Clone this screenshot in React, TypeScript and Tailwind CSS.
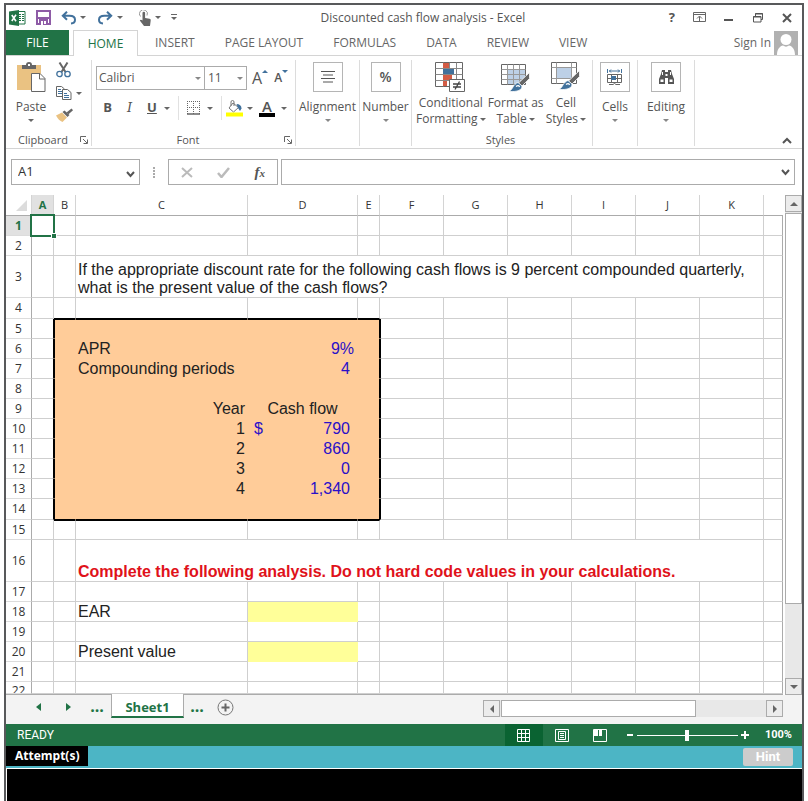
import type { ReactNode } from "react";

const UI = "font-['Open_Sans','Noto_Sans',sans-serif]";

function Caret({ className = "", color = "#666" }: { className?: string; color?: string }) {
  return (
    <svg className={`shrink-0 ${className}`} width="6" height="3" viewBox="0 0 6 3" aria-hidden="true">
      <path d="M0 0h6L3 3z" fill={color} />
    </svg>
  );
}

function Launcher() {
  return (
    <svg width="8" height="8" viewBox="0 0 8 8" fill="none" stroke="#666" aria-hidden="true">
      <path d="M.5 6V.5H6M3 3l4 4M7.5 3.5v4h-4" />
    </svg>
  );
}

function ExcelLogo() {
  return (
    <svg width="17" height="16" viewBox="0 0 17 16" aria-hidden="true">
      <path d="M9.5 1.500h6.500v12.500H9.500z" fill="#fff" stroke="#217346" />
      <path d="M10 4.500h5M10 6.500h5M10 8.500h5M10 10.500h5" stroke="#217346" />
      <path d="M12.500 2v11" stroke="#fff" />
      <path d="M0 1.500L10 0v16L0 14.500z" fill="#217346" />
      <path d="M2.800 5l4.200 6.200M7 4.800L2.800 11" stroke="#fff" strokeWidth="1.600" />
    </svg>
  );
}

function SaveIcon() {
  return (
    <svg width="15" height="15" viewBox="0 0 15 15" aria-hidden="true">
      <path d="M1 1h13v13H1z" fill="#fff" stroke="#8e5ba6" strokeWidth="2" />
      <path d="M1 8h13" stroke="#8e5ba6" strokeWidth="2" />
      <path d="M3 9h9v6H3z" fill="#8e5ba6" />
      <path d="M5 11h2v4H5zM8 11h2v3H8z" fill="#fff" />
    </svg>
  );
}

function UndoIcon({ flip = false }: { flip?: boolean }) {
  return (
    <svg width="15" height="14" viewBox="0 0 15 14" fill="none" stroke="#41719c" strokeWidth="2" aria-hidden="true">
      {flip ? (
        <path d="M9 .7l4.200 4-4.200 4M13 4.700H6.500C3 4.700 1 6.500 1 8.700s1.500 3.600 4 3.800" />
      ) : (
        <path d="M6 .7L1.800 4.700l4.200 4M2 4.700h6.500c3.500 0 5.500 1.800 5.500 4s-1.500 3.600-4 3.800" />
      )}
    </svg>
  );
}

function TouchIcon() {
  return (
    <svg width="12" height="16" viewBox="0 0 12 16" aria-hidden="true">
      <path d="M1.500 6.500a4 4 0 1 1 6.500-1" fill="none" stroke="#999" />
      <path d="M3.500 3a1.300 1.300 0 0 1 2.600 0v5l4.400.8c.9.200 1.300.8 1.200 1.600L11 16H5L.8 10.500c.6-1 1.700-.9 2.700.1z" fill="#666" />
    </svg>
  );
}

function PasteIcon() {
  return (
    <svg width="29" height="31" viewBox="0 0 29 31" aria-hidden="true">
      <path d="M0 3h24v25H0z" fill="#eac282" />
      <path d="M5 7V3h4a3 3 0 0 1 6 0h4v4z" fill="#666" />
      <path d="M11 2h2v2h-2z" fill="#fff" />
      <path d="M14.500 11.500H23l5 5v13H14.500z" fill="#fff" stroke="#666" />
      <path d="M22.500 11.500V17H28" fill="none" stroke="#666" />
    </svg>
  );
}

function ScissorsIcon() {
  return (
    <svg width="15" height="16" viewBox="0 0 15 16" fill="none" aria-hidden="true">
      <path d="M3.500 0.500l6 9.500M11.500 0.500l-6 9.500" stroke="#666" strokeWidth="2" />
      <circle cx="3.500" cy="12" r="2.700" stroke="#41719c" strokeWidth="1.300" />
      <circle cx="11.500" cy="12" r="2.700" stroke="#41719c" strokeWidth="1.300" />
    </svg>
  );
}

function CopyIcon() {
  return (
    <svg width="16" height="14" viewBox="0 0 16 14" fill="#fff" stroke="#666" aria-hidden="true">
      <path d="M.5.5h5l3 2.500v7.500h-8z" />
      <path d="M2 3.500h3M2 5.500h4M2 7.500h4" stroke="#41719c" />
      <path d="M6.500 3.500h5l3.500 3v7H6.500z" />
      <path d="M8 7.500h3M8 9.500h5M8 11.500h5" stroke="#41719c" />
    </svg>
  );
}

function BrushIcon() {
  return (
    <svg width="17" height="14" viewBox="0 0 17 14" aria-hidden="true">
      <path d="M0 7.500l6-3 5 5-4.500 4.500c-2.500-1-4.800-3-6.500-6.500z" fill="#eac282" />
      <path d="M6.500 4l2-1.500 5 4.500-2 2z" fill="#666" />
      <path d="M10.500 4.500L15.500.5l1.500 1.800-4.500 4z" fill="#666" />
    </svg>
  );
}

function BordersIcon() {
  return (
    <svg width="14" height="14" viewBox="0 0 14 14" fill="none" stroke="#666" aria-hidden="true">
      <path d="M.5 13V0M6.500 13V0M12.500 13V0M0 .5h13M0 6.500h13" strokeDasharray="1 1" />
      <path d="M0 13h13" strokeWidth="1.500" />
    </svg>
  );
}

function FillIcon() {
  return (
    <svg width="17" height="17" viewBox="0 0 17 17" aria-hidden="true">
      <path d="M7 3l5.500 4.500-5 4.500L3 8z" fill="#fff" stroke="#777" />
      <path d="M5 6V2a1.500 1.500 0 0 1 3 0v4" fill="none" stroke="#777" />
      <path d="M10.500 4c3 0 5 1.500 5 4.500l-1.500 2.500-2-3z" fill="#41719c" />
      <path d="M0 12.500h17v4H0z" fill="#ff0" />
    </svg>
  );
}

function ConditionalIcon() {
  return (
    <svg width="31" height="31" viewBox="0 0 31 31" aria-hidden="true">
      <path d="M.5.5h27v24H.5z" fill="#fff" stroke="#666" />
      <path d="M.5 6.500h27M.5 12.500h27M.5 18.500h27M8.500.5v24M14.500.5v24M21.500.5v24" stroke="#888" />
      <path d="M8 1h6v5H8zM8 13h9v5H8zM8 19h4v5H8z" fill="#d35c45" />
      <path d="M8 7h11v5H8z" fill="#41719c" />
      <path d="M14.500 17.500h15v12h-15z" fill="#fff" stroke="#666" />
      <path d="M18 22h8M18 25h8M24.500 19.500l-4.500 8" stroke="#444" strokeWidth="1.300" />
    </svg>
  );
}

// brush shared by the two style buttons
function StyleBrush() {
  return (
    <>
      <path d="M28.500 8.500v6L21 22l-3.500-3z" fill="#666" stroke="#fff" strokeWidth=".8" />
      <path d="M17 18.500l4 3.500c0 4-4 6-13 5.500 4-2 4-7.500 9-9z" fill="#41719c" stroke="#fff" strokeWidth=".8" />
      <path d="M15 22.500c2-1.500 3-1 3.500.5" fill="none" stroke="#fff" strokeWidth="1.400" />
    </>
  );
}

function FormatTableIcon() {
  return (
    <svg width="30" height="31" viewBox="0 0 30 31" aria-hidden="true">
      <g transform="translate(0 2)">
        <path d="M.5.5h24v20H.5z" fill="#fff" stroke="#666" />
        <path d="M7 6h17v14H7z" fill="#bdd0e6" />
        <path d="M.5 5.500h24M.5 10.500h24M.5 15.500h24M6.500.5v20M12.500.5v20M18.500.5v20" stroke="#999" />
        <StyleBrush />
      </g>
    </svg>
  );
}

function CellStylesIcon() {
  return (
    <svg width="30" height="29" viewBox="0 0 30 29" aria-hidden="true">
      <path d="M.5.5h25v21H.5z" fill="#fff" stroke="#666" />
      <path d="M6 6h15v10H6z" fill="#bdd0e6" />
      <path d="M.5 5.500h25M.5 16.500h25M5.500.5v21M20.500.5v21" stroke="#999" />
      <StyleBrush />
    </svg>
  );
}

function CellsIcon() {
  return (
    <svg width="16" height="17" viewBox="0 0 16 17" fill="none" aria-hidden="true">
      <path d="M.5 0v4M14.500 0v4M2 2h11M4 .5L2.500 2 4 3.500M11 .5L12.500 2 11 3.500" stroke="#41719c" />
      <path d="M.5 5.500h14v8H.5zM.5 9.500h14M4.500 5.500v8M10.500 5.500v8" stroke="#666" />
      <path d="M4 7h5v4H4z" fill="#41719c" />
      <path d="M2 15.500h4l1.500-1 1.500 1h4" stroke="#666" />
    </svg>
  );
}

function BinocularsIcon() {
  return (
    <svg width="15" height="14" viewBox="0 0 15 14" aria-hidden="true">
      <path d="M3 0h3v2h3V0h3l1 4 2 5v5H9V8H6v6H0V9l2-5z" fill="#555" />
      <path d="M1.500 9.500h3V12h-3zM10.500 9.500h3V12h-3zM6.500 4h2v2h-2z" fill="#fff" />
      <path d="M3.500 2v3M11.500 2v3" stroke="#fff" />
    </svg>
  );
}

function Divider() {
  return <span className="h-6 w-px shrink-0 bg-[#e1e1e1]" />;
}

function Group({ label, launcher = false, className, children }: { label?: string; launcher?: boolean; className: string; children: ReactNode }) {
  return (
    <section className={`flex h-[86px] shrink-0 flex-col border-r border-[#dcdcdc] ${className}`}>
      <div className="flex-1">{children}</div>
      {label && (
        <div className="flex h-3 items-center pr-[3px] text-[11px] leading-3">
          <span className="flex-1 text-center">{label}</span>
          {launcher && (
            <button aria-label={`${label} settings`}>
              <Launcher />
            </button>
          )}
        </div>
      )}
    </section>
  );
}

function BoxButton({ label, children }: { label: string; children: ReactNode }) {
  return (
    <button className="flex w-full flex-col items-center pt-0.5">
      <span className="flex size-[30px] items-center justify-center border border-[#b5b5b5]">{children}</span>
      <span className="mt-[7px] leading-4">{label}</span>
      <Caret className="mt-1" color="#888" />
    </button>
  );
}

function StyleButton({ lines, icon }: { lines: [string, string]; icon: ReactNode }) {
  return (
    <button className="flex flex-col items-center pt-0.5 leading-4">
      <span className="flex h-[33px] justify-center">{icon}</span>
      <span className="whitespace-nowrap">{lines[0]}</span>
      <span className="flex items-center gap-0.5 whitespace-nowrap">
        {lines[1]}
        <Caret />
      </span>
    </button>
  );
}

function TitleBar() {
  return (
    <header className="flex h-[25px] items-center pr-[10px] pl-[3px]">
      <ExcelLogo />
      <button aria-label="Save" className="ml-[10px]"><SaveIcon /></button>
      <button aria-label="Undo" className="ml-[10px] flex items-center gap-1"><UndoIcon /><Caret /></button>
      <button aria-label="Redo" className="ml-3 flex items-center gap-1"><UndoIcon flip /><Caret /></button>
      <button aria-label="Touch mode" className="ml-4 flex items-center gap-1"><TouchIcon /><Caret /></button>
      <button aria-label="Customize toolbar" className="ml-[10px]">
        <svg width="6" height="7" viewBox="0 0 6 7"><path d="M0 .5h6" stroke="#666" /><path d="M0 3h6L3 6z" fill="#666" /></svg>
      </button>
      <h1 className="flex-1 text-center text-xs text-[#555]">Discounted cash flow analysis - Excel</h1>
      <button aria-label="Help" className="text-[13px] font-bold text-[#555]">?</button>
      <button aria-label="Ribbon display options" className="ml-[18px]">
        <svg width="14" height="11" viewBox="0 0 14 11" fill="none" stroke="#666"><path d="M.5.5h12v9H.5zM.5 2.500h12M6.500 9V4.500M4 6.500L6.500 4 9 6.500" /></svg>
      </button>
      <button aria-label="Minimize" className="ml-[17px]">
        <svg width="10" height="8" viewBox="0 0 10 8"><path d="M0 6h9" stroke="#555" strokeWidth="2" /></svg>
      </button>
      <button aria-label="Restore" className="ml-[19px]">
        <svg width="11" height="10" viewBox="0 0 11 10" fill="none" stroke="#555"><path d="M2.500 3V.5h7v6H8M2 1h8M.5 3.500H8v5.500H.5zM0 4h8" /></svg>
      </button>
      <button aria-label="Close" className="ml-[18px]">
        <svg width="10" height="10" viewBox="0 0 10 10"><path d="M1 1l8 8M9 1L1 9" stroke="#555" strokeWidth="2" /></svg>
      </button>
    </header>
  );
}

function RibbonTabs() {
  return (
    <nav className="flex h-[26px] border-b border-[#d4d4d4] text-xs text-[#666]">
      <button className="w-[63px] bg-[#217346] text-white">FILE</button>
      <button className="-mb-px ml-1 w-[65px] border border-b-0 border-[#d4d4d4] bg-white text-[#217346]">HOME</button>
      <div className="flex pl-0.5">
        {["INSERT", "PAGE LAYOUT", "FORMULAS", "DATA", "REVIEW", "VIEW"].map((tab) => (
          <button key={tab} className="px-[15px]">{tab}</button>
        ))}
      </div>
      <a href="#signin" className="ml-auto flex items-center gap-[3px] pr-1">
        Sign In
        <svg width="24" height="24" viewBox="0 0 24 24" aria-hidden="true">
          <path d="M0 0h24v24H0z" fill="#b1b1b1" />
          <circle cx="12" cy="8.500" r="5.500" fill="#fff" />
          <path d="M3 24c0-6 3-9 6-9.500 2 1.500 4 1.500 6 0 3 .5 6 3.500 6 9.500z" fill="#fff" />
        </svg>
      </a>
    </nav>
  );
}

function Ribbon() {
  return (
    <div className="flex h-[93px] border-b border-[#d4d4d4] pt-1 text-xs text-[#555]">
      <Group label="Clipboard" launcher className="w-[86px]">
        <div className="flex pt-0.5">
          <button className="flex w-[50px] flex-col items-center">
            <PasteIcon />
            <span className="mt-1.5 leading-4">Paste</span>
            <Caret className="mt-1" />
          </button>
          <div className="flex flex-col items-start gap-2">
            <button aria-label="Cut"><ScissorsIcon /></button>
            <button aria-label="Copy" className="flex items-center gap-1"><CopyIcon /><Caret /></button>
            <button aria-label="Format painter"><BrushIcon /></button>
          </div>
        </div>
      </Group>

      <Group label="Font" launcher className="w-[204px]">
        <div className="flex items-center pt-1 pl-1">
          <label className="relative flex items-center text-xs">
            <select aria-label="Font" className="h-6 w-[109px] appearance-none border border-[#ababab] pl-0.5">
              <option>Calibri</option>
            </select>
            <Caret className="absolute right-1" color="#888" />
          </label>
          <label className="relative -ml-px flex items-center text-xs">
            <select aria-label="Font size" className="h-6 w-[43px] appearance-none border border-[#ababab] pl-[3px]">
              <option>11</option>
            </select>
            <Caret className="absolute right-1" color="#888" />
          </label>
          <button aria-label="Increase font size" className="ml-[5px] flex text-[#555]">
            <span className="text-base leading-7">A</span>
            <Caret className="mt-1.5 rotate-180" color="#41719c" />
          </button>
          <button aria-label="Decrease font size" className="ml-1.5 flex font-semibold text-[#555]">
            <span className="text-xs leading-7">A</span>
            <Caret className="mt-1.5" color="#41719c" />
          </button>
        </div>
        <div className="flex h-8 items-center pl-[11px] text-[13px]">
          <button className="w-[9px] font-bold">B</button>
          <button className="ml-[13px] w-[9px] font-['DejaVu_Serif',serif] text-[13px] italic">I</button>
          <button className="ml-[13px] w-[9px] font-bold underline">U</button>
          <Caret className="ml-2" />
          <span className="w-2" />
          <Divider />
          <button aria-label="Borders" className="ml-2 flex items-center gap-1.5"><BordersIcon /><Caret /></button>
          <span className="w-2" />
          <Divider />
          <button aria-label="Fill color" className="ml-1 flex items-center gap-1"><FillIcon /><Caret /></button>
          <button aria-label="Font color" className="ml-1.5 flex items-center gap-1.5">
            <span className="w-4 border-b-4 border-black text-[15px] leading-[13px] font-semibold">A</span>
            <Caret />
          </button>
        </div>
      </Group>

      <Group className="w-16">
        <BoxButton label="Alignment">
          <svg width="16" height="12" viewBox="0 0 16 12" stroke="#555"><path d="M1 .5h14M3 4h10M1 7.500h14M3 11h10" /></svg>
        </BoxButton>
      </Group>
      <Group className="w-[52px]">
        <BoxButton label="Number">
          <span className="text-sm font-semibold">%</span>
        </BoxButton>
      </Group>

      <Group label="Styles" className="w-[181px]">
        <div className="flex justify-between pr-1.5 pl-1">
          <StyleButton lines={["Conditional", "Formatting"]} icon={<ConditionalIcon />} />
          <StyleButton lines={["Format as", "Table"]} icon={<FormatTableIcon />} />
          <StyleButton lines={["Cell", "Styles"]} icon={<CellStylesIcon />} />
        </div>
      </Group>

      <Group className="w-[45px]">
        <BoxButton label="Cells"><CellsIcon /></BoxButton>
      </Group>
      <Group className="w-[57px]">
        <BoxButton label="Editing"><BinocularsIcon /></BoxButton>
      </Group>

      <button aria-label="Collapse ribbon" className="mt-auto mr-[10px] mb-1 ml-auto">
        <svg width="10" height="7" viewBox="0 0 10 7" fill="none"><path d="M1 6l4-4 4 4" stroke="#555" strokeWidth="2" /></svg>
      </button>
    </div>
  );
}

function ChevronDown() {
  return (
    <svg width="9" height="7" viewBox="0 0 9 7" fill="none" aria-hidden="true">
      <path d="M1 1l3.500 4L8 1" stroke="#555" strokeWidth="2" />
    </svg>
  );
}

function FormulaBar() {
  return (
    <div className="flex h-[46px] items-start pt-[10px] pr-[7px] pl-[5px] text-[#333]">
      <div className="flex h-[26px] w-[129px] items-center border border-[#ababab] pr-1 pl-1.5">
        <input aria-label="Name box" defaultValue="A1" className="w-0 flex-1 text-[13px] outline-none" />
        <button aria-label="Named ranges" className="pt-1"><ChevronDown /></button>
      </div>
      <svg className="mx-3 mt-2" width="4" height="12" viewBox="0 0 4 12" fill="#aaa" aria-hidden="true">
        <path d="M1 0h2v2H1zM1 3h2v2H1zM1 6h2v2H1zM1 9h2v2H1z" />
      </svg>
      <div className="flex h-[26px] w-[110px] items-center justify-between border border-[#ababab] px-3">
        <button aria-label="Cancel">
          <svg width="12" height="11" viewBox="0 0 12 11"><path d="M1 1l10 9M11 1L1 10" stroke="#bbb" strokeWidth="2" /></svg>
        </button>
        <button aria-label="Enter">
          <svg width="13" height="11" viewBox="0 0 13 11" fill="none"><path d="M1 6l3.500 4L12 1" stroke="#bbb" strokeWidth="2.500" /></svg>
        </button>
        <button aria-label="Insert function" className="font-['Liberation_Serif',serif] text-[15px] leading-4 font-bold text-[#555] italic">
          f<span className="text-[11px]">x</span>
        </button>
      </div>
      <div className="ml-[3px] flex h-[26px] flex-1 items-center border border-[#ababab] pr-1 pl-2">
        <input aria-label="Formula" className="w-0 flex-1 text-[13px] outline-none" />
        <button aria-label="Expand formula bar"><ChevronDown /></button>
      </div>
    </div>
  );
}

const COLUMNS = [
  { name: "A", width: "w-[22px]" },
  { name: "B", width: "w-[22px]" },
  { name: "C", width: "w-[172px]" },
  { name: "D", width: "w-[110px]" },
  { name: "E", width: "w-[22px]" },
  { name: "F", width: "w-16" },
  { name: "G", width: "w-16" },
  { name: "H", width: "w-16" },
  { name: "I", width: "w-16" },
  { name: "J", width: "w-16" },
  { name: "K", width: "w-16" },
  { name: "", width: "" },
];

const ROWS = Array.from({ length: 22 }, (_, i) => i + 1);

const rowHeight = (row: number) => {
  if (row === 3 || row === 16) return "h-[42px]";
  if (row === 4 || row === 14) return "h-[21px]";
  if (row === 22) return "h-3";
  return "h-5";
};

const LABEL = "pl-0.5 text-[#222]";
const YEAR = "pr-0.5 text-right text-[#222]";
const INPUT = "pr-[7px] text-right text-[#2a10c8]";

const CELLS: Record<string, { value: ReactNode; className: string }> = {
  C3: {
    value: (
      <p className="whitespace-normal">
        If the appropriate discount rate for the following cash flows is 9 percent compounded quarterly, what is the present value of the cash flows?
      </p>
    ),
    className: "pl-0.5 align-bottom text-[#222]",
  },
  C6: { value: "APR", className: LABEL },
  D6: { value: "9%", className: "pr-[3px] text-right text-[#2a10c8]" },
  C7: { value: "Compounding periods", className: LABEL },
  D7: { value: "4", className: INPUT },
  C9: { value: "Year", className: YEAR },
  D9: { value: "Cash flow", className: "text-center text-[#222]" },
  C10: { value: "1", className: YEAR },
  D10: {
    value: (
      <span className="flex justify-between">
        <span>$</span>
        <span>790</span>
      </span>
    ),
    className: "pr-[7px] pl-1.5 text-[#2a10c8]",
  },
  C11: { value: "2", className: YEAR },
  D11: { value: "860", className: INPUT },
  C12: { value: "3", className: YEAR },
  D12: { value: "0", className: INPUT },
  C13: { value: "4", className: YEAR },
  D13: { value: "1,340", className: INPUT },
  C16: { value: "Complete the following analysis. Do not hard code values in your calculations.", className: "pl-0.5 align-bottom font-bold text-[#e0121a]" },
  C18: { value: "EAR", className: LABEL },
  C20: { value: "Present value", className: LABEL },
};

// fill and border colours, including the framed B5:E14 block
function cellPaint(col: string, row: number) {
  const boxRow = row >= 5 && row <= 14;
  const boxCol = col !== "" && "BCDE".includes(col);
  const inBox = boxRow && boxCol;
  const out: string[] = [];

  if (col === "D" && (row === 18 || row === 20)) return "bg-[#ffff99] border-[#ffff99]";

  out.push(inBox ? "bg-[#ffcc99]" : "bg-white");
  if (boxCol && (row === 4 || row === 14)) out.push("border-b-black");
  else out.push(inBox ? "border-b-[#ffcc99]" : "border-b-[#cfcfcf]");
  if (boxRow && (col === "A" || col === "E")) out.push("border-r-black");
  else if (col === "") out.push("border-r-[#ababab]");
  else out.push(inBox ? "border-r-[#ffcc99]" : "border-r-[#cfcfcf]");
  if (boxCol && (row === 5 || row === 15)) out.push("border-t border-t-black");
  if (boxRow && (col === "B" || col === "F")) out.push("border-l border-l-black");
  return out.join(" ");
}

function Sheet() {
  return (
    <table className="w-full table-fixed border-separate border-spacing-0 border-b border-b-[#ababab]">
      <thead>
        <tr className="h-[21px] text-[11px] text-[#333]">
          <th className="w-[26px] border-r border-b border-r-[#d4d4d4] border-b-[#ababab] p-0">
            <svg className="mr-1 ml-auto" width="11" height="11" viewBox="0 0 11 11" aria-hidden="true"><path d="M11 0v11H0z" fill="#dcdcdc" /></svg>
          </th>
          {COLUMNS.map(({ name, width }) => (
            <th
              key={name}
              scope="col"
              className={`border-b border-b-[#ababab] p-0 leading-5 ${width} ${
                name === "A" ? "bg-[#e1e1e1] font-bold text-[#217346]" : "font-normal"
              } ${name === "" ? "" : "border-r border-r-[#d4d4d4]"}`}
            >
              {name}
            </th>
          ))}
        </tr>
      </thead>
      <tbody className="font-['Liberation_Sans',Arial,sans-serif] text-base leading-[18px]">
        {ROWS.map((row) => (
          <tr key={row} className={rowHeight(row)}>
            <th
              scope="row"
              className={`border-r border-b border-r-[#ababab] border-b-[#dcdcdc] p-0 font-['Open_Sans','Noto_Sans',sans-serif] text-xs ${
                row === 1 ? "bg-[#e1e1e1] font-bold text-[#217346]" : "font-normal text-[#333]"
              }`}
            >
              <div className={`overflow-hidden leading-[18px] ${row === 22 ? "h-[11px]" : ""}`}>{row}</div>
            </th>
            {COLUMNS.map(({ name }) => {
              const merged = row === 3 || row === 16;
              if (merged && name !== "" && "DEFGHIJK".includes(name)) return null;
              const cell = CELLS[`${name}${row}`];
              return (
                <td
                  key={name}
                  colSpan={merged && name === "C" ? 9 : undefined}
                  className={`border-r border-b p-0 whitespace-nowrap ${cellPaint(name, row)} ${cell?.className ?? ""} ${
                    name === "A" && row === 1 ? "relative" : ""
                  }`}
                >
                  {cell?.value}
                  {name === "A" && row === 1 && (
                    <span className="absolute -inset-0.5 border-2 border-[#217346]">
                      <span className="absolute -right-1 -bottom-1 size-[6px] border border-white bg-[#217346]" />
                    </span>
                  )}
                </td>
              );
            })}
          </tr>
        ))}
      </tbody>
    </table>
  );
}

function ScrollArrow({ label, path, className }: { label: string; path: string; className: string }) {
  return (
    <button aria-label={label} className={`flex shrink-0 items-center justify-center border border-[#ababab] bg-[#ececec] ${className}`}>
      <svg width="8" height="8" viewBox="0 0 8 8"><path d={path} fill="#666" /></svg>
    </button>
  );
}

function SheetTabs() {
  return (
    <div className="flex h-[29px] items-start bg-[#f3f3f3] text-[#217346]">
      <button aria-label="Previous sheet" className="ml-[30px] pt-2">
        <svg width="5" height="8" viewBox="0 0 5 8"><path d="M5 0v8L0 4z" fill="#217346" /></svg>
      </button>
      <button aria-label="Next sheet" className="ml-[25px] pt-2">
        <svg width="5" height="8" viewBox="0 0 5 8"><path d="M0 0v8l5-4z" fill="#217346" /></svg>
      </button>
      <button className="w-[40px] pl-3 text-base leading-[22px] font-bold">...</button>
      <button className="-mt-px h-6 w-[73px] border-x border-b-2 border-x-[#ababab] border-b-[#217346] bg-white pt-1 text-[13px] font-bold">Sheet1</button>
      <button className="w-[26px] text-base leading-[22px] font-bold">...</button>
      <button aria-label="New sheet" className="ml-[7px] pt-1">
        <svg width="17" height="17" viewBox="0 0 17 17" fill="none"><circle cx="8.500" cy="8.500" r="7.500" stroke="#777" /><path d="M8.500 4.500v8M4.500 8.500h8" stroke="#666" strokeWidth="2" /></svg>
      </button>
      <div className="mt-[5px] mr-[19px] ml-auto flex h-[17px] w-[300px] bg-[#e8e8e8]">
        <ScrollArrow label="Scroll left" path="M6 0v8L2 4z" className="w-[17px]" />
        <span className="ml-px w-[195px] border border-[#ababab] bg-white" />
        <ScrollArrow label="Scroll right" path="M2 0v8l4-4z" className="ml-auto w-[17px]" />
      </div>
    </div>
  );
}

function StatusBar() {
  return (
    <footer className="flex h-[22px] items-center bg-[#217346] pr-[10px] pl-[11px] text-white">
      <span className="flex-1 font-[Roboto,sans-serif] text-xs">READY</span>
      <button aria-label="Normal view" className="flex h-full w-[38px] items-center justify-center bg-[#0a6332]">
        <svg width="13" height="13" viewBox="0 0 13 13" fill="none" stroke="#fff"><path d="M.5.5h12v12H.5zM.5 4.500h12M.5 8.500h12M4.500.5v12M8.500.5v12" /></svg>
      </button>
      <button aria-label="Page layout view" className="ml-3">
        <svg width="14" height="13" viewBox="0 0 14 13" fill="none" stroke="#fff"><path d="M.5.5h13v12H.5zM3.500 2.500h7v8h-7zM5 4.500h4M5 6.500h4M5 8.500h4" /></svg>
      </button>
      <button aria-label="Page break view" className="ml-6">
        <svg width="14" height="13" viewBox="0 0 14 13"><path d="M.5.5h13v12H.5z" fill="none" stroke="#fff" /><path d="M1 1h4v6H1zM6 1h3v6H6z" fill="#fff" /></svg>
      </button>
      <button aria-label="Zoom out" className="ml-5">
        <svg width="6" height="2" viewBox="0 0 6 2"><path d="M0 0h6v2H0z" fill="#fff" /></svg>
      </button>
      <input
        type="range"
        aria-label="Zoom"
        className="ml-1 h-3 w-[101px] appearance-none bg-transparent [&::-webkit-slider-runnable-track]:h-px [&::-webkit-slider-runnable-track]:bg-white [&::-webkit-slider-thumb]:-mt-[5px] [&::-webkit-slider-thumb]:h-[11px] [&::-webkit-slider-thumb]:w-1 [&::-webkit-slider-thumb]:appearance-none [&::-webkit-slider-thumb]:bg-white"
      />
      <button aria-label="Zoom in" className="ml-[3px]">
        <svg width="8" height="8" viewBox="0 0 8 8"><path d="M3 0h2v3h3v2H5v3H3V5H0V3h3z" fill="#fff" /></svg>
      </button>
      <span className="ml-4 font-[Roboto,sans-serif] text-[11px] font-bold">100%</span>
    </footer>
  );
}

export default function App() {
  return (
    <div className={`flex min-h-screen flex-col bg-white px-1 pt-[3px] ${UI}`}>
      <div className="flex flex-1 flex-col border-2 border-b-0 border-[#58595b]">
        <TitleBar />
        <RibbonTabs />
        <Ribbon />
        <FormulaBar />
        <main className="flex">
          <div className="min-w-0 flex-1">
            <Sheet />
          </div>
          <div className="ml-0.5 flex w-[17px] flex-col bg-[#e8e8e8]">
            <ScrollArrow label="Scroll up" path="M0 6h8L4 2z" className="h-[17px]" />
            <span className="mt-px h-[391px] border border-[#ababab] bg-white" />
            <ScrollArrow label="Scroll down" path="M0 2h8L4 6z" className="mt-auto h-[17px]" />
          </div>
        </main>
        <SheetTabs />
        <StatusBar />
        <div className="flex h-[22px] items-start justify-between bg-[#4cb5c5] pr-[9px] text-xs font-bold text-white">
          <span className="bg-black px-[9px] leading-5">Attempt(s)</span>
          <button className="mt-0.5 h-[18px] w-[50px] rounded-xs bg-[#cccccc] font-[Roboto,sans-serif] text-[13px] leading-4">Hint</button>
        </div>
        <div className="flex-1 border-t border-l border-white bg-black" />
      </div>
    </div>
  );
}
